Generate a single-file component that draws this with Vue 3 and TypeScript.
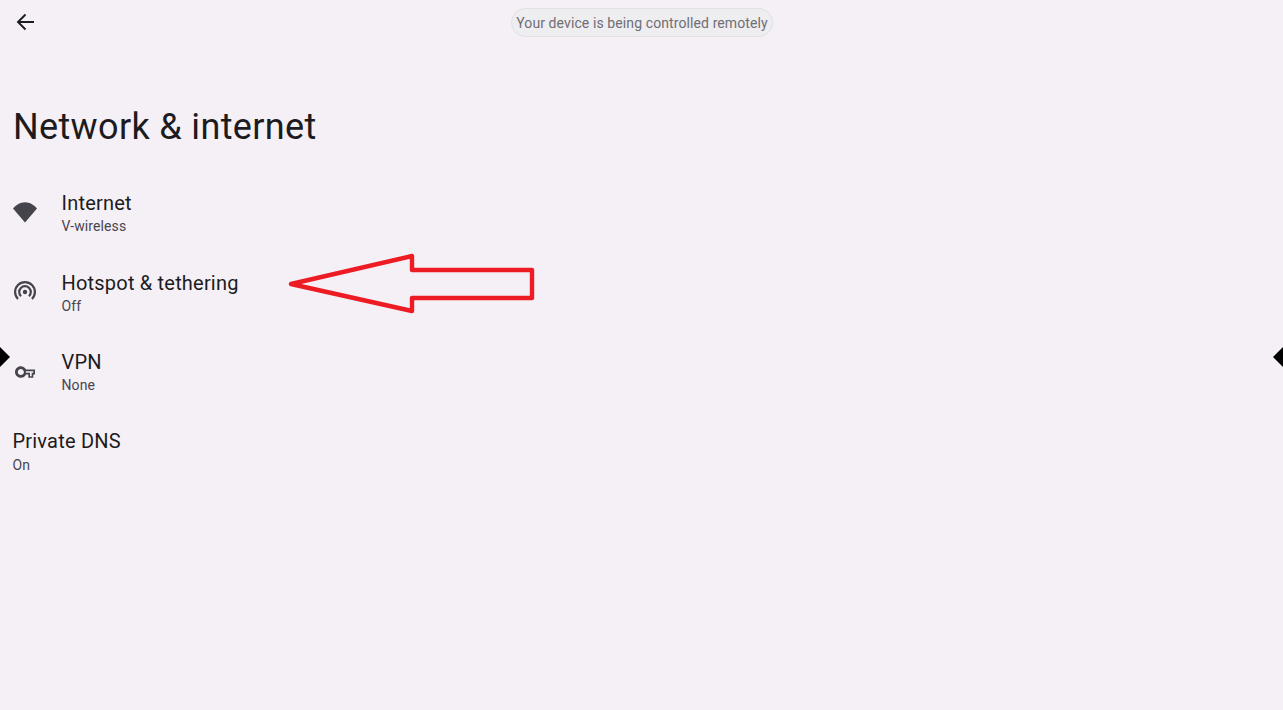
<script setup lang="ts">
interface Row { title: string; sub: string; icon: string }
const rows: Row[] = [
  { title: 'Internet', sub: 'V-wireless', icon: 'wifi' },
  { title: 'Hotspot & tethering', sub: 'Off', icon: 'hotspot' },
  { title: 'VPN', sub: 'None', icon: 'vpn' },
  { title: 'Private DNS', sub: 'On', icon: '' }
]
</script>

<template>
  <div class="page">
    <header class="toolbar">
      <svg class="back" width="24" height="24" viewBox="0 0 24 24" fill="none" stroke="#1d1b20" stroke-width="1.9">
        <path d="M21 12H5M12.5 4.5 5 12l7.5 7.5" />
      </svg>
    </header>
    <h1 class="title">Network &amp; internet</h1>
    <ul class="list">
      <li v-for="row in rows" :key="row.title" class="row">
        <span v-if="row.icon" class="icon">
          <svg v-if="row.icon === 'wifi'" width="24" height="24" viewBox="0 0 24 24">
            <path fill="#45434c" d="M12 21.5 0 7.5C3 4 7.3 1.2 12 1.2s9 2.8 12 6.3L12 21.5z" />
          </svg>
          <svg v-else-if="row.icon === 'hotspot'" width="24" height="24" viewBox="0 0 24 24" fill="none" stroke="#45434c" stroke-width="2.2">
            <circle cx="12" cy="12" r="2.2" fill="#45434c" stroke="none" />
            <path d="M8 16.2a5.8 5.8 0 1 1 8 0" />
            <path d="M5 19a9.9 9.9 0 1 1 14 0" />
          </svg>
          <svg v-else class="key" width="20" height="20" viewBox="0 0 24 24">
            <path fill="#45434c" fill-rule="evenodd" d="M22 19h-6v-4h-2.68c-1.14 2.42-3.6 4-6.32 4-3.86 0-7-3.14-7-7s3.14-7 7-7c2.72 0 5.17 1.58 6.32 4H24v6h-2v4zM18 17h2v-4h2v-2H13v2h5v4zM7 15.7c2.04 0 3.7-1.66 3.7-3.7S9.04 8.3 7 8.3 3.3 9.96 3.3 12s1.66 3.7 3.7 3.7z" />
          </svg>
        </span>
        <div class="text">
          <div class="row-title">{{ row.title }}</div>
          <div class="row-sub">{{ row.sub }}</div>
        </div>
      </li>
    </ul>

    <div class="pill">Your device is being controlled remotely</div>

    <svg class="arrow" width="260" height="70" viewBox="0 0 260 70" fill="none">
      <path d="M11 39 132 11V25H252V53H132V66L11 39Z" stroke="#ed1c24" stroke-width="4.4" stroke-linejoin="round" />
    </svg>

    <span class="handle handle-left"></span>
    <span class="handle handle-right"></span>
  </div>
</template>

<style>
html, body { margin: 0; background: #f4f0f6; }
</style>

<style scoped>
.page {
  position: relative;
  width: 1283px;
  height: 710px;
  overflow: hidden;
  background: #f4f0f6;
  font-family: Roboto, "Liberation Sans", sans-serif;
  color: #1d1b20;
}
.toolbar {
  height: 44px;
  padding-left: 13px;
  display: flex;
  align-items: center;
}
.back { display: block; }
.title {
  margin: 0;
  padding: 61px 0 0 13px;
  font-size: 36px;
  line-height: 44px;
  font-weight: 400;
  letter-spacing: 0.35px;
}
.list {
  list-style: none;
  margin: 0;
  padding: 24.1px 0 0 12.5px;
}
.row {
  display: flex;
  align-items: center;
  height: 79.4px;
}
.icon {
  width: 49px;
  flex: none;
  display: flex;
  align-items: center;
  height: 24px;
}
.icon svg { display: block; }
.icon .key { margin-left: 2px; }
.row-title {
  font-size: 20px;
  line-height: 26px;
  letter-spacing: 0.2px;
}
.row-sub {
  margin-top: 1.2px;
  font-size: 14px;
  line-height: 18px;
  color: #49454f;
  letter-spacing: 0.1px;
}
.pill {
  position: absolute;
  left: 511px;
  top: 8px;
  width: 262px;
  height: 29px;
  box-sizing: border-box;
  border: 1px solid #e2e0e4;
  border-radius: 15px;
  background: #eeedf0;
  color: #6f6e75;
  font-size: 14px;
  letter-spacing: 0.1px;
  line-height: 28px;
  text-align: center;
  white-space: nowrap;
}
.arrow {
  position: absolute;
  left: 280px;
  top: 245px;
}
.handle {
  position: absolute;
  top: 344px;
  width: 26px;
  height: 26px;
  background: #000;
  clip-path: polygon(50% 0, 100% 50%, 50% 100%, 0 50%);
}
.handle-left { left: -16px; }
.handle-right { left: 1273px; }
</style>
